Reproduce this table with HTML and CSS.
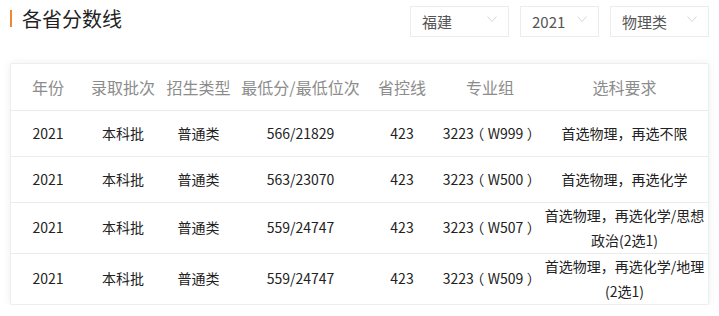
FILE: index.html
```html
<!DOCTYPE html>
<html lang="zh-CN">
<head>
<meta charset="utf-8">
<title>各省分数线</title>
<link rel="stylesheet" href="styles.css">
</head>
<body>
<div class="page">
  <div class="topbar">
    <h2 class="title">各省分数线</h2>
    <div class="filters">
      <div class="select w99"><span>福建</span><svg class="chev" width="10" height="6" viewBox="0 0 10 6"><path d="M0.5 0.5 L5 5.5 L9.5 0.5" fill="none" stroke="#d6d6d6" stroke-width="1"/></svg></div>
      <div class="select w79"><span>2021</span><svg class="chev" width="10" height="6" viewBox="0 0 10 6"><path d="M0.5 0.5 L5 5.5 L9.5 0.5" fill="none" stroke="#d6d6d6" stroke-width="1"/></svg></div>
      <div class="select w99"><span>物理类</span><svg class="chev" width="10" height="6" viewBox="0 0 10 6"><path d="M0.5 0.5 L5 5.5 L9.5 0.5" fill="none" stroke="#d6d6d6" stroke-width="1"/></svg></div>
    </div>
  </div>
  <div class="card">
    <table class="scores">
      <colgroup>
        <col class="c1"><col class="c2"><col class="c3"><col class="c4"><col class="c5"><col class="c6"><col class="c7">
      </colgroup>
      <thead>
        <tr><th>年份</th><th>录取批次</th><th>招生类型</th><th>最低分/最低位次</th><th>省控线</th><th>专业组</th><th>选科要求</th></tr>
      </thead>
      <tbody>
        <tr><td>2021</td><td>本科批</td><td>普通类</td><td>566/21829</td><td>423</td><td>3223<span class="fp">（</span>W999<span class="fp">）</span></td><td>首选物理，再选不限</td></tr>
        <tr><td>2021</td><td>本科批</td><td>普通类</td><td>563/23070</td><td>423</td><td>3223<span class="fp">（</span>W500<span class="fp">）</span></td><td>首选物理，再选化学</td></tr>
        <tr class="tall"><td>2021</td><td>本科批</td><td>普通类</td><td>559/24747</td><td>423</td><td>3223<span class="fp">（</span>W507<span class="fp">）</span></td><td>首选物理，再选化学/思想政治(2选1)</td></tr>
        <tr class="tall"><td>2021</td><td>本科批</td><td>普通类</td><td>559/24747</td><td>423</td><td>3223<span class="fp">（</span>W509<span class="fp">）</span></td><td>首选物理，再选化学/地理(2选1)</td></tr>
      </tbody>
    </table>
  </div>
</div>
</body>
</html>
```

FILE: styles.css
```css
* { box-sizing: border-box; }
html, body { margin: 0; padding: 0; background: #fff; }
body {
  font-family: "Noto Sans CJK SC", "Microsoft YaHei", sans-serif;
  color: #333;
  width: 719px;
  text-spacing-trim: space-all;
}
.page { padding: 6px 10px 0 10px; }
.topbar {
  display: flex;
  justify-content: space-between;
  align-items: flex-start;
  height: 31px;
}
.title {
  margin: 4px 0 0 0;
  font-size: 20px;
  font-weight: normal;
  line-height: 20px;
  color: #222;
  border-left: 2px solid #f08734;
  padding-left: 10px;
  height: 17px;
  display: flex;
  align-items: center;
}
.filters { display: flex; gap: 11px; }
.select {
  height: 31px;
  border: 1px solid #ececec;
  display: flex;
  align-items: center;
  justify-content: space-between;
  padding: 0 11px 0 11px;
  font-size: 15px;
  color: #555;
  background: #fff;
}
.select .chev { margin-top: -6px; }
.w99 { width: 99px; }
.w79 { width: 79px; }
.card {
  margin-top: 26px;
  width: 699px;
  border: 1px solid #eeeeee;
  border-radius: 2px;
  box-shadow: 0 0 8px rgba(0, 0, 0, 0.07);
  background: #fff;
}
.scores {
  width: 100%;
  border-collapse: collapse;
  table-layout: fixed;
}
.c1 { width: 74px; }
.c2 { width: 76px; }
.c3 { width: 75px; }
.c4 { width: 129px; }
.c5 { width: 74px; }
.c6 { width: 102px; }
.c7 { width: 167px; }
.scores th {
  height: 46px;
  font-size: 16px;
  font-weight: normal;
  color: #8c8c8c;
  text-align: center;
  padding: 0;
  white-space: nowrap;
}
.scores td {
  height: 46px;
  font-size: 14px;
  color: #222;
  text-align: center;
  padding: 0;
  line-height: 25px;
  border-top: 1px solid #ececec;
  white-space: nowrap;
}
.fp {
  font-feature-settings: "halt";
  padding: 0 0.25em;
}
.scores tr.tall td { height: 50px; white-space: normal; }
.scores td:last-child { padding: 0 2px; }
```
